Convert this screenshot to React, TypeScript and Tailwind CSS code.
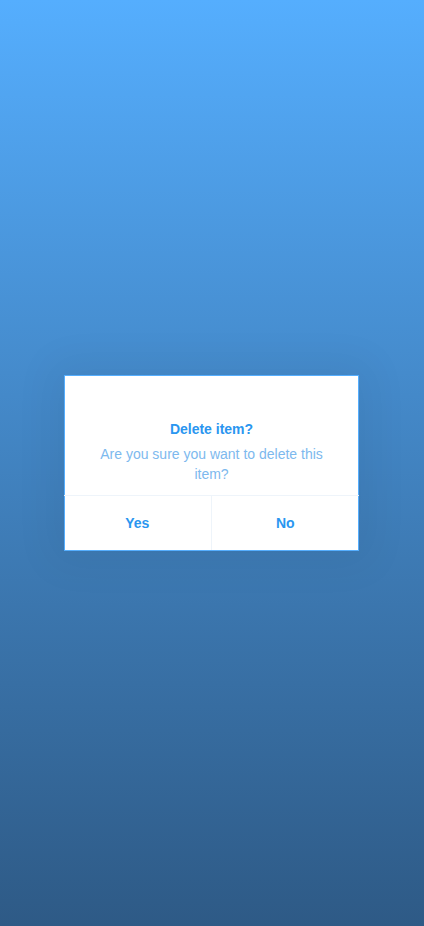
export default function App() {
  return (
    <div
      className="flex min-h-[926px] w-full items-center justify-center bg-gradient-to-b from-[#55aefe] to-[#2e5a86]"
      style={{ fontFamily: '"Liberation Sans", Arial, sans-serif' }}
    >
      {/* Confirm dialog */}
      <div className="mr-px flex w-[295px] flex-col border border-[#55aefe] bg-white shadow-[0_0_40px_12px_rgba(0,0,0,0.05)]">
        <div className="flex flex-col items-center px-6 pb-[11px] pt-[43px] text-center">
          <h2 className="text-sm leading-5 font-bold text-[#2a96f0]">Delete item?</h2>
          <p className="mt-[5px] text-sm leading-5 text-[#7db9ee]">
            Are you sure you want to delete this item?
          </p>
        </div>
        <div className="-mx-px grid grid-cols-2 border-t border-[#eef4fa]">
          <button className="h-[54px] border-r border-[#eef4fa] text-sm font-bold text-[#2a96f0]">
            Yes
          </button>
          <button className="h-[54px] text-sm font-bold text-[#2a96f0]">No</button>
        </div>
      </div>
    </div>
  )
}
